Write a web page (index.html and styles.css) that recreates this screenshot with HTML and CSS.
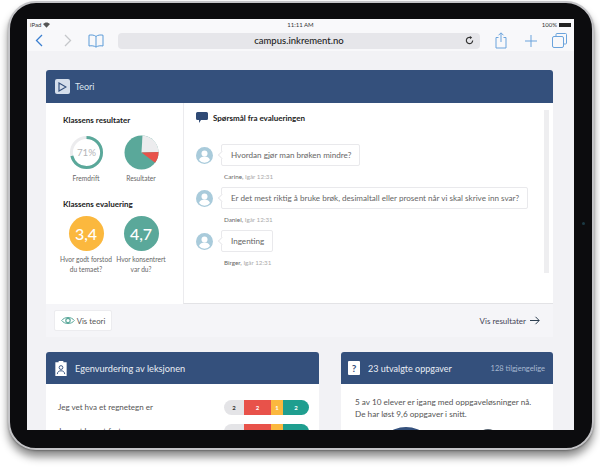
FILE: index.html
```html
<!DOCTYPE html>
<html lang="nb">
<head>
    <meta charset="UTF-8">
    <title>campus.inkrement.no</title>
    <link rel="stylesheet" href="styles.css">
</head>
<body>
    <div class="device">
        <span class="camera"></span>
        <div class="screen">
            <div class="status-bar">
                <span class="status-left">iPad
                    <svg class="wifi" width="7" height="6" viewBox="0 0 14 11"><path d="M7 11 0 3.5C4-.7 10-.7 14 3.5Z" fill="#555"/></svg>
                </span>
                <span class="status-time">11:11 AM</span>
                <span class="status-right">100% <span class="battery"></span></span>
            </div>

            <div class="toolbar">
                <svg class="tool-back" width="8" height="13" viewBox="0 0 8 13"><path d="M7 1 1.500 6.500 7 12" fill="none" stroke="#3b7fd0" stroke-width="1.300"/></svg>
                <svg class="tool-forward" width="8" height="13" viewBox="0 0 8 13"><path d="M1 1 6.500 6.500 1 12" fill="none" stroke="#c5c7ca" stroke-width="1.300"/></svg>
                <svg class="tool-book" width="16" height="14" viewBox="0 0 16 14"><path d="M8 2.500C6.500 1 3.500.7 1 1.200V12c2.500-.5 5.500-.2 7 1.200 1.500-1.400 4.500-1.700 7-1.200V1.200C12.500.7 9.500 1 8 2.500V13" fill="none" stroke="#5b9bd8" stroke-width="1"/></svg>
                <div class="url-bar">
                    <span class="url-text">campus.inkrement.no</span>
                    <svg class="reload" width="9" height="9" viewBox="0 0 10 10"><path d="M8.500 5A3.500 3.500 0 1 1 6 1.700" fill="none" stroke="#333" stroke-width="1.300"/><path d="M5.500 0 8 1.800 5.500 3.600Z" fill="#333"/></svg>
                </div>
                <svg class="tool-share" width="12" height="17" viewBox="0 0 12 17"><path d="M3.500 5.500H1V16h10V5.500H8.500M6 10V1M3.500 3.300 6 .8l2.500 2.500" fill="none" stroke="#6aa3dc" stroke-width="1"/></svg>
                <svg class="tool-plus" width="12" height="12" viewBox="0 0 12 12"><path d="M6 0v12M0 6h12" stroke="#6aa3dc" stroke-width="1"/></svg>
                <svg class="tool-tabs" width="15" height="15" viewBox="0 0 15 15"><path d="M4 3V1.500A1 1 0 0 1 5 .5h8.500a1 1 0 0 1 1 1V10a1 1 0 0 1-1 1H12" fill="none" stroke="#6aa3dc"/><rect x=".5" y="3.500" width="11" height="11" rx="1.500" fill="none" stroke="#6aa3dc"/></svg>
            </div>

            <div class="page">
                <section class="card">
                    <header class="card-header card-header-teori">
                        <span class="play-icon"><svg width="9" height="10" viewBox="0 0 9 10"><path d="M1 1 8 5 1 9Z" fill="none" stroke="#34507c" stroke-width="1.200"/></svg></span>
                        <span class="card-title-teori">Teori</span>
                    </header>
                    <div class="teori-body">
                        <div class="stats">
                            <h3 class="stats-title">Klassens resultater</h3>
                            <div class="stats-row stats-row-charts">
                                <div class="stat">
                                    <svg width="35" height="35" viewBox="0 0 36 36">
                                        <circle cx="18" cy="18" r="15.500" fill="none" stroke="#ececee" stroke-width="3"/>
                                        <circle cx="18" cy="18" r="15.500" fill="none" stroke="#5aa89a" stroke-width="3" stroke-dasharray="69 98" transform="rotate(-90 18 18)"/>
                                        <text x="18" y="21.500" class="ring-label" text-anchor="middle">71%</text>
                                    </svg>
                                    <span class="stat-label">Fremdrift</span>
                                </div>
                                <div class="stat">
                                    <svg width="35" height="35" viewBox="0 0 36 36">
                                        <circle cx="18" cy="18" r="17.500" fill="#5aa89a"/>
                                        <path d="M18 18 19 .5A17.500 17.500 0 0 1 35.500 17.500Z" fill="#ececee"/>
                                        <path d="M18 18 35.500 17.500A17.500 17.500 0 0 1 32 28.500Z" fill="#e8524a"/>
                                    </svg>
                                    <span class="stat-label">Resultater</span>
                                </div>
                            </div>
                            <h3 class="stats-title">Klassens evaluering</h3>
                            <div class="stats-row">
                                <div class="stat">
                                    <span class="score score-yellow">3,4</span>
                                    <span class="stat-label">Hvor godt forstod<br>du temaet?</span>
                                </div>
                                <div class="stat">
                                    <span class="score score-green">4,7</span>
                                    <span class="stat-label">Hvor konsentrert<br>var du?</span>
                                </div>
                            </div>
                        </div>
                        <div class="questions">
                            <h3 class="questions-title">
                                <svg width="12" height="11" viewBox="0 0 12 11"><path d="M1.500 0h9A1.500 1.500 0 0 1 12 1.500v5A1.500 1.500 0 0 1 10.500 8H5L3 11V8H1.500A1.500 1.500 0 0 1 0 6.500v-5A1.500 1.500 0 0 1 1.500 0Z" fill="#2f4a75"/></svg>
                                Spørsmål fra evalueringen
                            </h3>
                            <div class="question">
                                <svg class="avatar" width="17" height="17" viewBox="0 0 17 17"><circle cx="8.500" cy="8.500" r="8.500" fill="#a9cbdb"/><circle cx="8.500" cy="6.500" r="3" fill="#fff"/><path d="M3 13c1-3 3-3.500 5.500-3.500S13 10 14 13a7 7 0 0 1-11 0Z" fill="#fff"/></svg>
                                <div class="question-main">
                                    <div class="bubble">Hvordan gjør man brøken mindre?</div>
                                    <div class="meta">Carine, <span class="meta-time">Igår 12:31</span></div>
                                </div>
                            </div>
                            <div class="question">
                                <svg class="avatar" width="17" height="17" viewBox="0 0 17 17"><circle cx="8.500" cy="8.500" r="8.500" fill="#a9cbdb"/><circle cx="8.500" cy="6.500" r="3" fill="#fff"/><path d="M3 13c1-3 3-3.500 5.500-3.500S13 10 14 13a7 7 0 0 1-11 0Z" fill="#fff"/></svg>
                                <div class="question-main">
                                    <div class="bubble">Er det mest riktig å bruke brøk, desimaltall eller prosent når vi skal skrive inn svar?</div>
                                    <div class="meta">Daniel, <span class="meta-time">Igår 12:31</span></div>
                                </div>
                            </div>
                            <div class="question">
                                <svg class="avatar" width="17" height="17" viewBox="0 0 17 17"><circle cx="8.500" cy="8.500" r="8.500" fill="#a9cbdb"/><circle cx="8.500" cy="6.500" r="3" fill="#fff"/><path d="M3 13c1-3 3-3.500 5.500-3.500S13 10 14 13a7 7 0 0 1-11 0Z" fill="#fff"/></svg>
                                <div class="question-main">
                                    <div class="bubble">Ingenting</div>
                                    <div class="meta">Birger, <span class="meta-time">Igår 12:31</span></div>
                                </div>
                            </div>
                            <div class="scrollbar"></div>
                        </div>
                    </div>
                    <footer class="card-footer">
                        <span class="vis-teori">
                            <svg width="14" height="9" viewBox="0 0 14 9"><path d="M.7 4.500C3.500.5 10.500.5 13.300 4.500 10.500 8.500 3.500 8.500.7 4.500Z" fill="none" stroke="#5aa89a" stroke-width="1"/><circle cx="7" cy="4.500" r="2.200" fill="none" stroke="#5aa89a" stroke-width="1.200"/></svg>
                            Vis teori
                        </span>
                        <span class="vis-resultater">Vis resultater
                            <svg width="10" height="9" viewBox="0 0 10 9"><path d="M0 4.500h9M5.500 .8 9.200 4.500 5.500 8.200" fill="none" stroke="#2c3e50" stroke-width="1"/></svg>
                        </span>
                    </footer>
                </section>

                <div class="bottom-row">
                    <section class="card card-left">
                        <header class="card-header">
                            <svg width="12" height="16" viewBox="0 0 12 17"><path d="M0 2.500h3.500V1h5v1.500H12V17H0Z" fill="#fff"/><circle cx="6" cy="8" r="2" fill="none" stroke="#34507c"/><path d="M2 15c.5-3 2-3.500 4-3.500s3.500.5 4 3.500" fill="none" stroke="#34507c"/></svg>
                            <span class="card-title">Egenvurdering av leksjonen</span>
                        </header>
                        <div class="eval-body">
                            <div class="eval-row">
                                <span>Jeg vet hva et regnetegn er</span>
                                <span class="bar"><i class="seg seg-grey">2</i><i class="seg seg-red">2</i><i class="seg seg-yellow">1</i><i class="seg seg-teal">2</i></span>
                            </div>
                            <div class="eval-row">
                                <span>Jeg vet hva et fortegn er</span>
                                <span class="bar"><i class="seg seg-grey">2</i><i class="seg seg-red">2</i><i class="seg seg-yellow">1</i><i class="seg seg-teal">2</i></span>
                            </div>
                        </div>
                    </section>
                    <section class="card card-right">
                        <header class="card-header card-header-tasks">
                            <span class="task-icon">?</span>
                            <span class="card-title card-title-tasks">23 utvalgte oppgaver</span>
                            <span class="card-extra">128 tilgjengelige</span>
                        </header>
                        <div class="task-body">
                            <p class="task-text">5 av 10 elever er igang med oppgaveløsninger nå.<br>De har løst 9,6 oppgaver i snitt.</p>
                            <div class="task-charts">
                                <span class="task-chart"></span>
                                <span class="task-chart task-chart-small"></span>
                            </div>
                        </div>
                    </section>
                </div>
            </div>
        </div>
    </div>
</body>
</html>
```

FILE: styles.css
```css
html, body {
    margin: 0;
    padding: 0;
}

body {
    width: 600px;
    height: 469px;
    overflow: hidden;
    background-color: #fff;
    font-family: "Lato", "Noto Sans", sans-serif;
    color: #444;
}

.device {
    position: relative;
    box-sizing: border-box;
    width: 586px;
    height: 449px;
    margin: 1px 0 0 8px;
    padding: 16px 18px 0 17px;
    background-color: #0c0c0e;
    border: 2px solid #c4c4c7;
    border-radius: 28px;
    box-shadow: 0 7px 9px rgba(0, 0, 0, 0.45), 0 1px 2px rgba(0, 0, 0, 0.3);
}

.camera {
    position: absolute;
    top: 219px;
    right: 7px;
    width: 3px;
    height: 3px;
    border-radius: 50%;
    background-color: #1c3a44;
}

.screen {
    height: 411px;
    overflow: hidden;
    background-color: #f2f2f5;
    display: flex;
    flex-direction: column;
}

.status-bar {
    height: 11px;
    flex: none;
    padding: 0 3px;
    display: flex;
    justify-content: space-between;
    align-items: center;
    background-color: #f9f9fb;
    font-size: 6px;
    color: #333;
}

.status-left,
.status-right {
    width: 60px;
    display: flex;
    align-items: center;
    gap: 2px;
}

.status-right {
    justify-content: flex-end;
}

.battery {
    width: 12px;
    height: 4px;
    background-color: #222;
}

.toolbar {
    height: 21px;
    flex: none;
    display: flex;
    align-items: center;
    background-color: #f8f8fa;
}

.tool-back {
    margin-left: 8px;
}

.tool-forward {
    margin-left: 21px;
}

.tool-book {
    margin-left: 16px;
}

.url-bar {
    width: 362px;
    height: 16px;
    margin-left: 14px;
    padding-right: 6px;
    box-sizing: border-box;
    position: relative;
    display: flex;
    align-items: center;
    justify-content: flex-end;
    background-color: #e6e6ea;
    border-radius: 4px;
}

.url-text {
    position: absolute;
    left: 0;
    right: 0;
    text-align: center;
    font-size: 9.500px;
    font-weight: 500;
    color: #222;
}

.tool-share {
    margin-left: 15px;
}

.tool-plus {
    margin-left: 18px;
}

.tool-tabs {
    margin-left: 15px;
}

.page {
    flex: 1;
    padding: 19px 21px 0 19px;
}

.card {
    background-color: #fff;
    border-radius: 3px 3px 0 0;
}

.card-header {
    height: 32px;
    padding: 0 9px;
    display: flex;
    align-items: center;
    gap: 8px;
    background-color: #34507c;
    border-radius: 3px 3px 0 0;
    color: #fff;
}

.card-header-teori {
    height: 33px;
    gap: 5px;
}

.card-header-tasks {
    padding: 0 8px 0 7px;
}

.play-icon {
    width: 15px;
    height: 15px;
    display: flex;
    align-items: center;
    justify-content: center;
    background-color: #d5deeb;
    border-radius: 2px;
}

.card-title-teori {
    font-size: 9px;
    color: #dbe3ee;
}

.card-title {
    font-size: 9.200px;
    color: #e9eef5;
}

.card-title-tasks {
    font-size: 9px;
}

.card-extra {
    margin-left: auto;
    font-size: 7.500px;
    color: #a8b9d1;
}

.task-icon {
    width: 12px;
    height: 14px;
    display: flex;
    align-items: center;
    justify-content: center;
    background-color: #fff;
    border-radius: 1px;
    font-size: 10px;
    font-weight: 700;
    color: #34507c;
}

.teori-body {
    height: 201px;
    display: flex;
}

.stats {
    width: 137px;
    flex: none;
    padding: 12px 0 0 17px;
    box-sizing: border-box;
}

.stats-title {
    margin: 0;
    font-size: 8px;
    font-weight: 700;
    color: #222;
}

.stats-row {
    margin: 7px 0 0 -3px;
    display: flex;
    gap: 3px;
}

.stats-row-charts {
    margin: 10px 0 16px -3px;
}

.stat {
    width: 52px;
    display: flex;
    flex-direction: column;
    align-items: center;
    gap: 3px;
    font-size: 6.600px;
    line-height: 10px;
    text-align: center;
    color: #666;
}

.stat-label {
    white-space: nowrap;
}

.ring-label {
    font-size: 10px;
    fill: #b5b5b8;
}

.score {
    width: 35px;
    height: 35px;
    border-radius: 50%;
    display: flex;
    align-items: center;
    justify-content: center;
    font-size: 16px;
    font-weight: 500;
    color: #fff;
}

.score-yellow {
    background-color: #fbb83e;
}

.score-green {
    background-color: #5aa89a;
}

.questions {
    flex: 1;
    position: relative;
    padding: 9px 0 0 12px;
    border-left: 1px solid #ebebee;
    border-bottom: 1px solid #e3e3e6;
}

.questions-title {
    margin: 0 0 21px;
    display: flex;
    align-items: center;
    gap: 5px;
    font-size: 8px;
    font-weight: 700;
    color: #222;
}

.question {
    display: flex;
    gap: 8px;
    margin-bottom: 7px;
    height: 36px;
}

.avatar {
    margin-top: 3px;
    flex: none;
}

.question-main {
    display: flex;
    flex-direction: column;
    align-items: flex-start;
}

.bubble {
    position: relative;
    box-sizing: border-box;
    height: 22px;
    padding: 0 8px 0 9px;
    display: flex;
    align-items: center;
    white-space: nowrap;
    background-color: #fff;
    border: 1px solid #e9e9ec;
    border-radius: 2px;
    font-size: 8.100px;
    color: #666;
}

.bubble::before {
    content: "";
    position: absolute;
    left: -3px;
    top: 7px;
    width: 5px;
    height: 5px;
    background-color: #fff;
    border-left: 1px solid #e9e9ec;
    border-bottom: 1px solid #e9e9ec;
    transform: rotate(45deg);
}

.meta {
    margin: 7px 0 0 3px;
    font-size: 6.300px;
    color: #666;
}

.meta-time {
    color: #aaa;
}

.scrollbar {
    position: absolute;
    top: 7px;
    right: 4px;
    width: 5px;
    height: 163px;
    background-color: #eeeef0;
}

.card-footer {
    height: 33px;
    padding: 0 13px 0 8px;
    display: flex;
    align-items: center;
    justify-content: space-between;
    background-color: #f5f5f8;
}

.vis-teori {
    width: 58px;
    height: 21px;
    box-sizing: border-box;
    display: flex;
    align-items: center;
    justify-content: center;
    gap: 2px;
    background-color: #fff;
    border: 1px solid #ececef;
    border-radius: 2px;
    font-size: 7.800px;
    color: #555;
}

.vis-resultater {
    display: flex;
    align-items: center;
    gap: 4px;
    font-size: 8px;
    color: #445;
}

.bottom-row {
    margin-top: 15px;
    display: flex;
    gap: 22px;
}

.card-left {
    width: 273px;
    flex: none;
}

.card-right {
    flex: 1;
}

.eval-body {
    padding: 11px 10px 0 12px;
}

.eval-row {
    height: 24px;
    display: flex;
    align-items: center;
    justify-content: space-between;
    font-size: 8px;
    color: #555;
}

.bar {
    width: 85px;
    height: 15px;
    display: flex;
    overflow: hidden;
    border-radius: 8px;
}

.seg {
    display: flex;
    align-items: center;
    justify-content: center;
    font-size: 6px;
    font-style: normal;
    font-weight: 700;
    color: #fff;
}

.seg-grey {
    width: 20px;
    background-color: #e4e4e7;
    color: #333;
}

.seg-red {
    width: 27px;
    background-color: #e8524a;
}

.seg-yellow {
    width: 12px;
    background-color: #fbb83e;
}

.seg-teal {
    flex: 1;
    background-color: #1f9e8f;
}

.task-body {
    padding: 12px 14px 0;
}

.task-text {
    margin: 0;
    font-size: 8.200px;
    line-height: 12px;
    color: #555;
}

.task-charts {
    margin: 7px 0 0 21px;
    display: flex;
    gap: 41px;
}

.task-chart {
    width: 60px;
    height: 60px;
    flex: none;
    border-radius: 50%;
    background-color: #34507c;
}

.task-chart-small {
    width: 22px;
    height: 22px;
    margin-top: 2px;
    background-color: #5a6672;
}
```
